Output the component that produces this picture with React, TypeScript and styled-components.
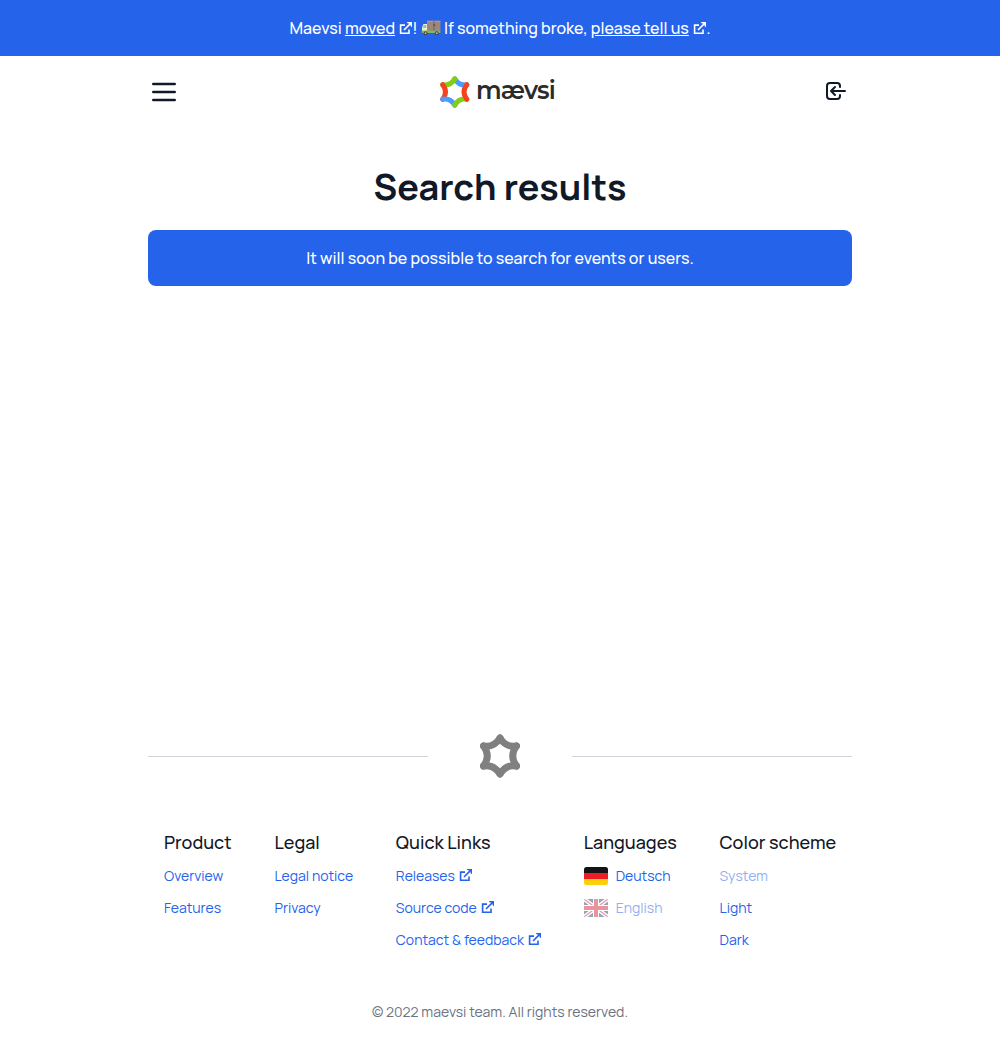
import React from 'react';
import styled, { createGlobalStyle } from 'styled-components';

const Global = createGlobalStyle`
  *, *::before, *::after { box-sizing: border-box; }
  body { margin: 0; background: #fff; color: #111827; font: 400 16px/24px Manrope, Inter, sans-serif; }
  h1, h2, p, ul { margin: 0; padding: 0; }
  ul { list-style: none; }
  svg { display: block; flex: none; overflow: visible; }
`;

const Page = styled.div`
  min-height: 1040px;
  display: flex;
  flex-direction: column;
`;

const Banner = styled.div`
  height: 56px;
  display: flex;
  align-items: center;
  justify-content: center;
  background: #2563eb;
  color: #fff;
  font-weight: 500;
  white-space: pre;
`;

const Text = styled.span`
  white-space: pre;
`;

const BannerLink = styled.a`
  color: inherit;
  text-decoration: underline;
`;

const Container = styled.div`
  width: 704px;
  margin: 0 auto;
  flex: 1;
  display: flex;
  flex-direction: column;
`;

const Header = styled.header`
  height: 72px;
  display: flex;
  align-items: center;
  justify-content: space-between;
`;

const IconButton = styled.button<{ $lift?: number }>`
  width: 32px;
  height: 32px;
  padding: 0 0 ${(p) => p.$lift ?? 0}px;
  border: 0;
  background: none;
  color: #111827;
  display: flex;
  align-items: center;
  justify-content: center;
`;

const Main = styled.main`
  flex: 1;
  padding-top: 36px;
`;

const Title = styled.h1`
  font-size: 36px;
  line-height: 45px;
  font-weight: 700;
  text-align: center;
`;

const Notice = styled.p`
  height: 56px;
  margin-top: 21px;
  border-radius: 8px;
  background: #2563eb;
  color: #fff;
  font-weight: 500;
  display: flex;
  align-items: center;
  justify-content: center;
`;

const Divider = styled.div`
  height: 48px;
  display: flex;
  align-items: center;
  justify-content: space-between;
`;

const Rule = styled.div`
  width: 280px;
  height: 1px;
  background: #d1d5db;
`;

const Columns = styled.div`
  margin-top: 48px;
  padding: 0 16px;
  display: flex;
  justify-content: space-between;
`;

const Column = styled.section<{ $w: number }>`
  width: ${(p) => p.$w}px;
`;

const Heading = styled.h2`
  font-size: 18px;
  line-height: 28px;
  font-weight: 500;
  white-space: nowrap;
`;

const List = styled.ul`
  margin-top: 4px;
`;

const Item = styled.li<{ $muted?: boolean }>`
  height: 32px;
  display: flex;
  align-items: center;
  font-size: 14px;
  font-weight: 400;
  line-height: 20px;
  color: #2563eb;
  opacity: ${(p) => (p.$muted ? 0.5 : 1)};
  white-space: nowrap;
`;

const Flag = styled.span`
  width: 24px;
  height: 18px;
  margin-right: 8px;
  flex: none;
`;

const Copyright = styled.p`
  margin: 46px 0 18px;
  font-size: 14px;
  line-height: 20px;
  text-align: center;
  color: #6b7280;
`;

const IconSlot = styled.span<{ $lift?: number }>`
  width: 13.3px;
  margin-left: 4px;
  padding-bottom: ${(p) => p.$lift ?? 0}px;
`;

const ExternalIcon = ({ lift }: { lift?: number }) => (
  <IconSlot $lift={lift}>
    <svg width="14" height="14" viewBox="0 0 14 14" fill="none" stroke="currentColor" strokeWidth="1.6">
      <path d="M6 4.1H1.6v8.2h8.4V8.6M5 9l6.4-6.4" />
      <path d="M7.8 1h5.2v5.2l-1.5-1.1V3.7l-1.2-1.2H8.9z" fill="currentColor" stroke="none" />
    </svg>
  </IconSlot>
);

const Truck = () => (
  <svg width="20" height="16" viewBox="0 0 20 16" role="img" aria-label="delivery truck">
    <path d="M6 .8h13.4V11H6z" fill="#9c877f" />
    <path d="M6 .8h13.4V2H6z" fill="#ab9991" />
    <path d="M12.4.8h1V11h-1z" fill="#7b635c" />
    <path d="M12.4 4.5h1.8v1.2h-1.8z" fill="#4e3b36" />
    <path d="M1 12V7.6L2.4 4H6v8z" fill="#f1ecc4" />
    <path d="M1.8 8l1-3h2.4v3z" fill="#7cc4e4" />
    <path d="M.8 10.6h18.6V13H.8z" fill="#7fb95c" />
    <circle cx="4.6" cy="13.2" r="1.9" fill="#424242" />
    <circle cx="15.8" cy="13.2" r="1.9" fill="#424242" />
    <circle cx="4.6" cy="13.2" r=".9" fill="#c5c5c5" />
    <circle cx="15.8" cy="13.2" r=".9" fill="#c5c5c5" />
  </svg>
);

const SIDES = [
  'M20 4Q26.2 14 36.5 12',
  'M20 4Q13.8 14 3.5 12',
  'M3.5 12Q11.1 22 3.5 32',
  'M3.5 32Q13.8 30 20 40',
  'M20 40Q26.2 30 36.5 32',
  'M36.5 12Q28.9 22 36.5 32',
];

const Star = ({ width, height, colors }: { width: number; height: number; colors: string[] }) => (
  <svg width={width} height={height} viewBox="0 0 40 44" fill="none" strokeWidth="6.9" strokeLinecap="round">
    {SIDES.map((d, i) => (
      <path key={d} d={d} stroke={colors[i]} />
    ))}
  </svg>
);

const Brand = styled.a`
  display: flex;
  align-items: center;
  height: 32px;
  margin-right: 2px;
`;

const Wordmark = () => (
  <svg width="88" height="48" viewBox="-5 -4 88 48">
    <text x="1" y="27" textLength="79" lengthAdjust="spacingAndGlyphs" letterSpacing="-0.9" fontFamily="Montserrat, Inter, sans-serif" fontSize="26" fontWeight="600" fill="#2b2b2b">mævsi</text>
  </svg>
);

const Menu = () => (
  <svg width="32" height="32" viewBox="0 0 24 24" fill="none" stroke="currentColor" strokeWidth="2" strokeLinecap="round">
    <path d="M4 6h16M4 12h16M4 18h16" />
  </svg>
);

const Login = () => (
  <svg width="24" height="24" viewBox="0 0 24 24" fill="none" stroke="currentColor" strokeWidth="2" strokeLinecap="round" strokeLinejoin="round">
    <path d="M11 16l-4-4m0 0l4-4m-4 4h14m-5 4v1a3 3 0 0 1-3 3H6a3 3 0 0 1-3-3V7a3 3 0 0 1 3-3h7a3 3 0 0 1 3 3v1" />
  </svg>
);

const Germany = () => (
  <svg width="24" height="18" viewBox="0 0 24 18">
    <clipPath id="de"><rect width="24" height="18" rx="2.5" /></clipPath>
    <g clipPath="url(#de)">
      <path d="M0 0h24v6H0z" fill="#141414" />
      <path d="M0 6h24v6H0z" fill="#ee1c25" />
      <path d="M0 12h24v6H0z" fill="#fdcf08" />
    </g>
  </svg>
);

const Britain = () => (
  <svg width="24" height="18" viewBox="0 0 24 18">
    <clipPath id="gb"><rect width="24" height="18" rx="1.5" /></clipPath>
    <g clipPath="url(#gb)">
      <path d="M0 0h24v18H0z" fill="#29497f" />
      <path d="M0 0l24 18M24 0L0 18" stroke="#fff" strokeWidth="4" />
      <path d="M0 0l24 18M24 0L0 18" stroke="#d52b3e" strokeWidth="1.2" />
      <path d="M12 0v18M0 9h24" stroke="#fff" strokeWidth="6" />
      <path d="M12 0v18M0 9h24" stroke="#d52b3e" strokeWidth="4" />
    </g>
  </svg>
);

type Entry = { label: string; external?: boolean; muted?: boolean; flag?: React.ReactNode };

const columns: { title: string; width: number; items: Entry[] }[] = [
  { title: 'Product', width: 67.6, items: [{ label: 'Overview' }, { label: 'Features' }] },
  { title: 'Legal', width: 78.5, items: [{ label: 'Legal notice' }, { label: 'Privacy' }] },
  {
    title: 'Quick Links', width: 145, items: [
      { label: 'Releases', external: true },
      { label: 'Source code', external: true },
      { label: 'Contact & feedback', external: true },
    ],
  },
  {
    title: 'Languages', width: 93, items: [
      { label: 'Deutsch', flag: <Germany /> },
      { label: 'English', flag: <Britain />, muted: true },
    ],
  },
  {
    title: 'Color scheme', width: 116.4, items: [
      { label: 'System', muted: true },
      { label: 'Light' },
      { label: 'Dark' },
    ],
  },
];

export default function App() {
  return (
    <Page>
      <Global />
      <Banner>
        <Text>Maevsi </Text>
        <BannerLink>moved</BannerLink>
        <ExternalIcon />
        <Text>! </Text>
        <Truck />
        <Text> If something broke, </Text>
        <BannerLink>please tell us</BannerLink>
        <ExternalIcon />
        <Text>.</Text>
      </Banner>
      <Container>
        <Header>
          <IconButton aria-label="Menu"><Menu /></IconButton>
          <Brand>
            <Star width={29.5} height={32} colors={['#4b9cff', '#84cc16', '#f4431f', '#4b9cff', '#84cc16', '#f4431f']} />
            <Wordmark />
          </Brand>
          <IconButton $lift={2} aria-label="Sign in"><Login /></IconButton>
        </Header>
        <Main>
          <Title>Search results</Title>
          <Notice><Text>It will soon be possible to search for events or users.</Text></Notice>
        </Main>
        <footer>
          <Divider>
            <Rule />
            <Star width={40} height={44} colors={Array(6).fill('#808080')} />
            <Rule />
          </Divider>
          <Columns>
            {columns.map((c) => (
              <Column key={c.title} $w={c.width}>
                <Heading>{c.title}</Heading>
                <List>
                  {c.items.map((i) => (
                    <Item key={i.label} $muted={i.muted}>
                      {i.flag && <Flag>{i.flag}</Flag>}
                      <Text>{i.label}</Text>
                      {i.external && <ExternalIcon lift={2} />}
                    </Item>
                  ))}
                </List>
              </Column>
            ))}
          </Columns>
          <Copyright><Text>© 2022 maevsi team. All rights reserved.</Text></Copyright>
        </footer>
      </Container>
    </Page>
  );
}
